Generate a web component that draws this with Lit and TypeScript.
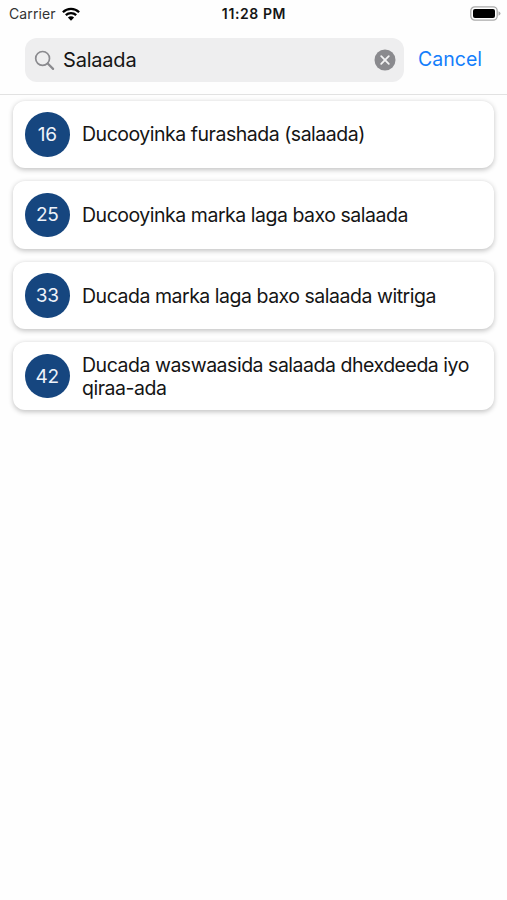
import { LitElement, html, css } from "lit";
import { customElement, property } from "lit/decorators.js";

@customElement("dua-card")
class DuaCard extends LitElement {
  @property({ type: Number }) number = 0;
  @property() label = "";

  static styles = css`
    :host {
      display: flex;
      align-items: center;
      gap: 12.5px;
      box-sizing: border-box;
      height: 67.3px;
      padding: 0 12px;
      border-radius: 12px;
      background: #fff;
      box-shadow: 0 1.5px 5px rgba(0, 0, 0, 0.23);
    }
    .badge {
      flex: none;
      display: grid;
      place-items: center;
      width: 44.5px;
      height: 44.5px;
      border-radius: 50%;
      background: #16467f;
      color: #eef3fa;
      font-size: 19px;
      letter-spacing: -0.2px;
    }
    .label {
      padding-top: 1px;
      font-size: 19.5px;
      line-height: 23px;
      letter-spacing: -0.48px;
      color: #151515;
    }
  `;

  render() {
    return html`<span class="badge">${this.number}</span><span class="label">${this.label}</span>`;
  }
}

@customElement("app-root")
class AppRoot extends LitElement {
  private results = [
    { number: 16, label: "Ducooyinka furashada (salaada)" },
    { number: 25, label: "Ducooyinka marka laga baxo salaada" },
    { number: 33, label: "Ducada marka laga baxo salaada witriga" },
    { number: 42, label: "Ducada waswaasida salaada dhexdeeda iyo qiraa-ada" },
  ];

  static styles = css`
    :host {
      display: block;
      height: 900px;
      overflow: hidden;
      background: #fefefe;
      font-family: Inter, "Liberation Sans", sans-serif;
      color: #151515;
    }
    svg {
      display: block;
      flex: none;
    }
    .header {
      box-sizing: border-box;
      height: 95px;
      border-bottom: 1px solid #e2e2e2;
    }
    .status {
      display: grid;
      grid-template-columns: 1fr auto 1fr;
      align-items: center;
      height: 27px;
      padding: 0 6px 0 9px;
      font-size: 14px;
    }
    .carrier {
      display: flex;
      align-items: center;
      gap: 6px;
      letter-spacing: 0.12px;
      color: #333;
    }
    .time {
      font-weight: 600;
      font-size: 14px;
      letter-spacing: 0.6px;
      margin-right: 2px;
    }
    .battery {
      justify-self: end;
    }
    .search {
      display: flex;
      align-items: center;
      gap: 14px;
      padding: 11px 25px 0;
    }
    .field {
      flex: 1;
      display: flex;
      align-items: center;
      box-sizing: border-box;
      height: 44px;
      padding: 0 8px 0 9px;
      border-radius: 12px;
      background: #eeeeef;
    }
    .query {
      flex: 1;
      padding-left: 8px;
      font-size: 20px;
      letter-spacing: -0.2px;
    }
    .cancel {
      padding-bottom: 2px;
      font-size: 19.5px;
      color: #147efb;
    }
    .list {
      display: flex;
      flex-direction: column;
      gap: 13.3px;
      padding: 5.7px 13px 0;
    }
  `;

  render() {
    return html`
      <div class="header">
        <div class="status">
          <div class="carrier">
            <span>Carrier</span>
            <svg width="18" height="14" viewBox="0 0 18 14">
              <g fill="none" stroke="#000" stroke-width="2.3">
                <path d="M0.9 5.2a11.6 11.6 0 0 1 16.2 0" />
                <path d="M3.8 8.2a7.5 7.5 0 0 1 10.4 0" />
              </g>
              <path d="M9 13.7L5.9 10.5a4.4 4.4 0 0 1 6.2 0z" />
            </svg>
          </div>
          <span class="time">11:28 PM</span>
          <svg class="battery" width="31" height="15" viewBox="0 0 31 15">
            <rect x="0.8" y="0.9" width="26.4" height="13.2" rx="4" fill="#fff" stroke="#aaa" stroke-width="1.3" />
            <rect x="3" y="3" width="22" height="9" rx="2" />
            <path d="M28.5 5.2q2 0.7 2 2.3t-2 2.3z" fill="#aaa" />
          </svg>
        </div>
        <div class="search">
          <div class="field">
            <svg width="21" height="21" viewBox="0 0 21 21" fill="none" stroke="#8a8a8e">
              <circle cx="8.6" cy="8.4" r="6.9" stroke-width="1.7" />
              <path d="M13.7 13.5l5.4 5.4" stroke-width="2.2" stroke-linecap="round" />
            </svg>
            <span class="query">Salaada</span>
            <svg width="22" height="22" viewBox="0 0 22 22">
              <circle cx="11" cy="11" r="10.5" fill="#8a8a8e" />
              <path d="M7.2 7.2l7.6 7.6M14.8 7.2l-7.6 7.6" stroke="#f3f3f4" stroke-width="1.8" stroke-linecap="round" />
            </svg>
          </div>
          <span class="cancel">Cancel</span>
        </div>
      </div>
      <div class="list">
        ${this.results.map((r) => html`<dua-card .number=${r.number} .label=${r.label}></dua-card>`)}
      </div>
    `;
  }
}
